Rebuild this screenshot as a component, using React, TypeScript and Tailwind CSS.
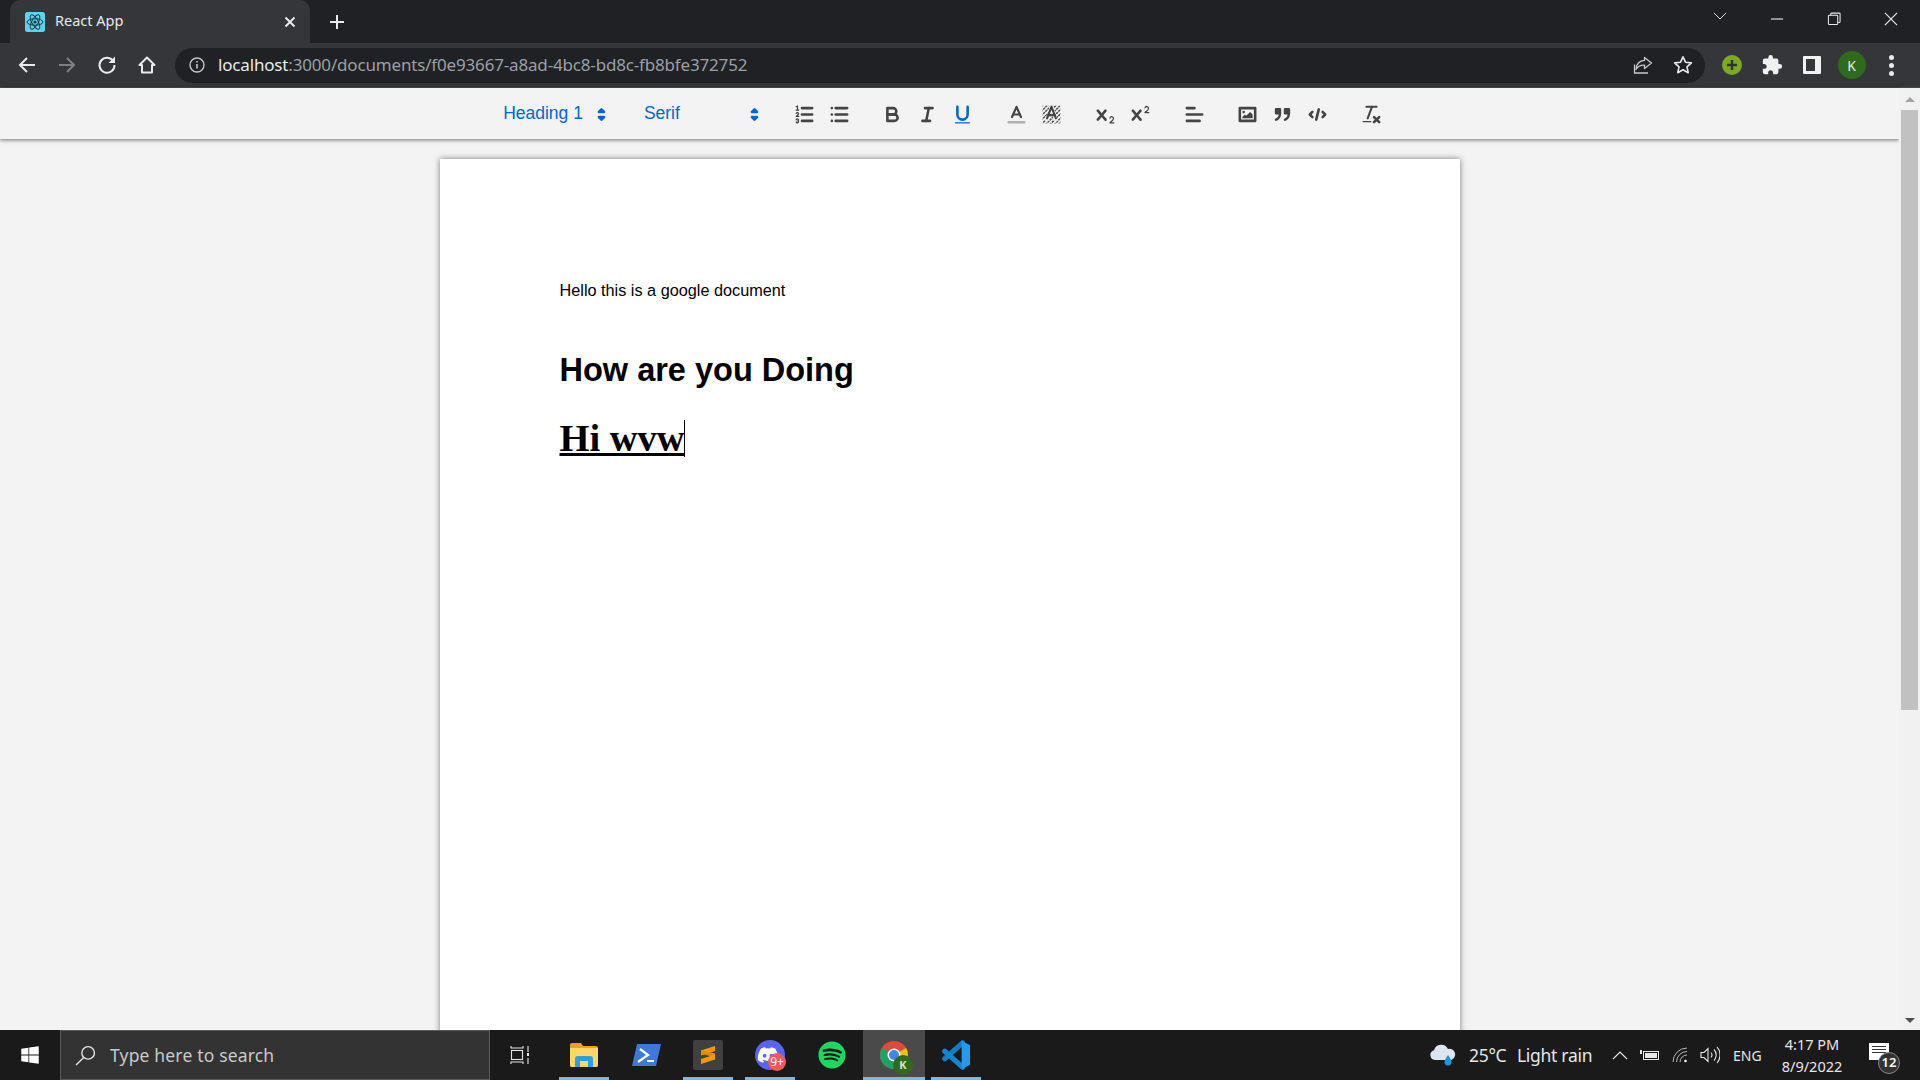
import React from "react";
import { FaDiscord, FaSpotify, FaWindows } from "react-icons/fa6";

const S = "#444";
const Ic = ({ children, active }: { children: React.ReactNode; active?: boolean }) => (
  <button className="w-[35px] h-[30px] px-[6px] py-[3px] flex items-center justify-center">
    <svg viewBox="0 0 18 18" className="w-[23px] h-[23px] shrink-0" fill="none" stroke={active ? "#06c" : S} strokeWidth="2" strokeLinecap="round" strokeLinejoin="round">
      {children}
    </svg>
  </button>
);
const Group = ({ children }: { children: React.ReactNode }) => <div className="flex mr-[18.75px]">{children}</div>;
const XPath = "M9.65,5.241a1,1,0,0,0-1.409.108L6,7.964,3.759,5.349A1,1,0,0,0,2.192,6.59178Q2.21541,6.621,2.241,6.651L4.684,9.5,2.241,12.349A1,1,0,0,0,3.71,13.70722q0.02557-.02768.049-0.05722L6,11.036,8.241,13.65a1,1,0,1,0,1.567-1.24277Q9.78459,12.378,9.759,12.349L7.316,9.5,9.759,6.651A1,1,0,0,0,9.65,5.241Z";

const Picker = ({ label, w }: { label: string; w: string }) => (
  <div className={`${w} flex items-center justify-between mr-[18.75px] text-[17.5px] text-[#0066cc] font-['Liberation_Sans',sans-serif]`}>
    <span className="-mt-[2px]">{label}</span>
    <svg viewBox="0 0 18 18" className="w-[23px] h-[23px]" fill="none" stroke="#06c" strokeWidth="2" strokeLinejoin="round" strokeLinecap="round">
      <polygon points="7 11 9 13 11 11 7 11" fill="#06c" />
      <polygon points="7 7 9 5 11 7 7 7" fill="#06c" />
    </svg>
  </div>
);

const Toolbar = () => (
  <div className="h-[51px] shrink-0 bg-[#f3f3f3] flex items-center justify-center pt-px shadow-[0_1px_4px_rgba(0,0,0,0.55)] relative z-10">
    <Picker label="Heading 1" w="w-[123px] pl-[12px] pr-[1px]" />
    <Picker label="Serif" w="w-[135px] pl-[11px] pr-[1.5px]" />
    <Group>
      <Ic>
        <line x1="7" x2="15" y1="4" y2="4" /><line x1="7" x2="15" y1="9" y2="9" /><line x1="7" x2="15" y1="14" y2="14" />
        <line strokeWidth="1" x1="2.5" x2="4.5" y1="5.5" y2="5.5" />
        <path fill={S} stroke="none" d="M3.5,6A0.5,0.5,0,0,1,3,5.5V3.085l-0.276.138A0.5,0.5,0,0,1,2.053,3c-0.124-.247-0.023-0.324.224-0.447l1-.5A0.5,0.5,0,0,1,4,2.5v3A0.5,0.5,0,0,1,3.5,6Z" />
        <path strokeWidth="1" d="M4.5,10.5h-2c0-.234,1.85-1.076,1.85-2.234A0.959,0.959,0,0,0,2.5,8.156" />
        <path strokeWidth="1" d="M2.5,14.846a0.959,0.959,0,0,0,1.85-.109A0.7,0.7,0,0,0,3.75,14a0.688,0.688,0,0,0,.6-0.736,0.959,0.959,0,0,0-1.85-.109" />
      </Ic>
      <Ic>
        <line x1="6" x2="15" y1="4" y2="4" /><line x1="6" x2="15" y1="9" y2="9" /><line x1="6" x2="15" y1="14" y2="14" />
        <line x1="3" x2="3" y1="4" y2="4" /><line x1="3" x2="3" y1="9" y2="9" /><line x1="3" x2="3" y1="14" y2="14" />
      </Ic>
    </Group>
    <Group>
      <Ic>
        <path d="M5,4H9.5A2.5,2.5,0,0,1,12,6.5v0A2.5,2.5,0,0,1,9.5,9H5A0,0,0,0,1,5,9V4A0,0,0,0,1,5,4Z" />
        <path d="M5,9h5.5A2.5,2.5,0,0,1,13,11.5v0A2.5,2.5,0,0,1,10.5,14H5a0,0,0,0,1,0,0V9A0,0,0,0,1,5,9Z" />
      </Ic>
      <Ic>
        <line x1="7" x2="13" y1="4" y2="4" /><line x1="5" x2="11" y1="14" y2="14" /><line x1="8" x2="10" y1="14" y2="4" />
      </Ic>
      <Ic active>
        <path d="M5,3V9a4.012,4.012,0,0,0,4,4H9a4.012,4.012,0,0,0,4-4V3" />
        <rect fill="#06c" stroke="none" height="1" rx=".5" ry=".5" width="12" x="3" y="15" />
      </Ic>
    </Group>
    <Group>
      <Ic>
        <line stroke="#b0b0b0" x1="3" x2="15" y1="15" y2="15" />
        <polyline strokeWidth="1.7" points="5.5 11 9 3 12.5 11" />
        <line strokeWidth="1.7" x1="11.63" x2="6.38" y1="9" y2="9" />
      </Ic>
      <Ic>
        <defs>
          <pattern id="hatch" width="2.4" height="2.4" patternUnits="userSpaceOnUse" patternTransform="rotate(45)">
            <rect width="1.1" height="1.9" fill="#444" stroke="none" />
          </pattern>
        </defs>
        <rect x="2" y="2" width="14" height="14" fill="url(#hatch)" stroke="none" />
        <polyline stroke="#f3f3f3" strokeWidth="3" points="5.5 13 9 3.500 12.5 13" />
        <polyline strokeWidth="1.7" points="5.5 12 9 3 12.5 12" />
        <line strokeWidth="1.7" x1="11.63" x2="6.38" y1="9.5" y2="9.5" />
      </Ic>
    </Group>
    <Group>
      <Ic>
        <path fill={S} stroke="none" d="M15.5,15H13.861a3.858,3.858,0,0,0,1.914-2.975,1.8,1.8,0,0,0-1.6-1.751A1.921,1.921,0,0,0,12.021,11.7a0.50013,0.50013,0,1,0,.957.291h0a0.914,0.914,0,0,1,1.053-.725,0.81,0.81,0,0,1,.744.762c0,1.076-1.16971,1.86982-1.93971,2.43082A1.45639,1.45639,0,0,0,12,15.5a0.5,0.5,0,0,0,.5.5h3A0.5,0.5,0,0,0,15.5,15Z" />
        <path fill={S} stroke="none" d={XPath} />
      </Ic>
      <Ic>
        <path fill={S} stroke="none" d="M15.5,7H13.861a4.015,4.015,0,0,0,1.914-2.975,1.8,1.8,0,0,0-1.6-1.751A1.922,1.922,0,0,0,12.021,3.7a0.5,0.5,0,1,0,.957.291,0.917,0.917,0,0,1,1.053-.725,0.81,0.81,0,0,1,.744.762c0,1.077-1.164,1.925-1.934,2.486A1.423,1.423,0,0,0,12,7.5a0.5,0.5,0,0,0,.5.5h3A0.5,0.5,0,0,0,15.5,7Z" />
        <path fill={S} stroke="none" d={XPath} />
      </Ic>
    </Group>
    <Group>
      <Ic>
        <line x1="3" x2="15" y1="9" y2="9" /><line x1="3" x2="13" y1="14" y2="14" /><line x1="3" x2="9" y1="4" y2="4" />
      </Ic>
    </Group>
    <Group>
      <Ic>
        <rect height="10" width="12" x="3" y="4" />
        <circle fill={S} stroke="none" cx="6" cy="7" r="1" />
        <polyline fill={S} stroke="none" points="5 12 5 11 7 9 8 10 11 7 13 9 13 12 5 12" />
      </Ic>
      <Ic>
        <rect fill={S} height="3" width="3" x="4" y="5" />
        <rect fill={S} height="3" width="3" x="11" y="5" />
        <path d="M7,8c0,4.031-3,5-3,5" />
        <path d="M14,8c0,4.031-3,5-3,5" />
      </Ic>
      <Ic>
        <polyline points="5 7 3 9 5 11" /><polyline points="13 7 15 9 13 11" /><line x1="10" x2="8" y1="5" y2="13" />
      </Ic>
    </Group>
    <Group>
      <Ic>
        <line strokeWidth="1.6" x1="5" x2="13" y1="3" y2="3" />
        <line strokeWidth="1.6" x1="6" x2="9.35" y1="12" y2="3" />
        <line x1="11" x2="15" y1="11" y2="15" /><line x1="15" x2="11" y1="11" y2="15" />
        <rect fill={S} stroke="none" height="1" rx=".5" ry=".5" width="7" x="2" y="14" />
      </Ic>
    </Group>
  </div>
);

const Tab = () => (
  <div className="h-[43px] shrink-0 bg-[#202124] flex items-stretch pl-[10px]">
    <div className="w-[300px] bg-[#35363a] rounded-t-[10px] flex items-center pl-[15px] pr-[12px]">
      <svg viewBox="0 0 20 20" className="w-[20px] h-[20px] shrink-0">
        <rect width="20" height="20" rx="2.5" fill="#5bd4f0" />
        <g fill="none" stroke="#1b3a46" strokeWidth="1">
          <ellipse cx="10" cy="10" rx="8" ry="3.2" />
          <ellipse cx="10" cy="10" rx="8" ry="3.2" transform="rotate(60 10 10)" />
          <ellipse cx="10" cy="10" rx="8" ry="3.2" transform="rotate(120 10 10)" />
        </g>
        <circle cx="10" cy="10" r="1.6" fill="#1b3a46" />
      </svg>
      <span className="ml-[10px] text-[#e8eaed] text-[14.5px] -mt-[2px] font-['Noto_Sans',sans-serif]">React App</span>
      <svg viewBox="0 0 12 12" className="w-[12px] h-[12px] ml-auto mr-[2px]" stroke="#e8eaed" strokeWidth="2"><path d="M1.5 1.5l9 9M10.5 1.5l-9 9" /></svg>
    </div>
    <div className="flex items-center ml-[19px]">
      <svg viewBox="0 0 16 16" className="w-[16px] h-[16px]" stroke="#e8eaed" strokeWidth="2"><path d="M8 1v14M1 8h14" /></svg>
    </div>
    <div className="ml-auto flex items-center h-[38px] pr-[1px]">
      {[
        <path d="M1 1l6.5 6.5L14 1" strokeWidth="1" />,
        <path d="M1 7.5h13" strokeWidth="1.2" />,
        <g strokeWidth="1.1"><rect x="1.5" y="3.5" width="10" height="10" rx="1" /><path d="M4 3.5V2a.8.8 0 0 1 .8-.8h8.4a.8.8 0 0 1 .8.8v8.4a.8.8 0 0 1-.8.8h-1.7" /></g>,
        <path d="M1 1l13 13M14 1L1 14" strokeWidth="1.3" />,
      ].map((d, i) => (
        <div key={i} className="w-[57px] flex items-center justify-center">
          <svg viewBox="0 0 15 15" className="w-[14px] h-[14px] overflow-visible" fill="none" stroke="#e8eaed">{d}</svg>
        </div>
      ))}
    </div>
  </div>
);

const NavBtn = ({ children }: { children: React.ReactNode }) => (
  <div className="w-[40px] flex items-center justify-center">
    <svg viewBox="0 0 24 24" className="w-[24px] h-[24px]" fill="none" stroke="#e8eaed" strokeWidth="2">{children}</svg>
  </div>
);

const Address = () => (
  <div className="h-[45px] shrink-0 bg-[#35363a] flex items-center pl-[7px] border-b border-[#4a4b4f]">
    <NavBtn><path d="M20 12H5M12 5l-7 7 7 7" /></NavBtn>
    <NavBtn><path d="M4 12h15M12 5l7 7-7 7" stroke="#7e8084" /></NavBtn>
    <NavBtn><path d="M18.5 8.5A7.5 7.5 0 1 0 19.5 12" /><path d="M20 3.5v6.5h-6.5z" fill="#e8eaed" stroke="none" /></NavBtn>
    <NavBtn><path d="M12 4.5l-7.5 7.5h2.5v7.5h10V12h2.5z" strokeLinejoin="round" /></NavBtn>
    <div className="ml-[8px] w-[1530px] h-[35px] rounded-full bg-[#202124] flex items-center pl-[14px] pr-[12px]">
      <svg viewBox="0 0 16 16" className="w-[16px] h-[16px] shrink-0" fill="none" stroke="#c4c7cb" strokeWidth="1.4">
        <circle cx="8" cy="8" r="7" /><path d="M8 7v4.5M8 4v1.6" strokeWidth="1.6" />
      </svg>
      <span className="ml-[13px] text-[17px] tracking-[-0.17px] font-['Noto_Sans',sans-serif] whitespace-nowrap text-[#9aa0a6]">
        <span className="text-[#e8eaed]">localhost</span>:3000/documents/f0e93667-a8ad-4bc8-bd8c-fb8bfe372752
      </span>
      <div className="ml-auto flex items-center gap-[20px]">
        <svg viewBox="0 0 20 20" className="w-[20px] h-[20px]" fill="none" stroke="#c4c7cb" strokeWidth="1.3">
          <path d="M1.5 9.5v8.5h13.5" /><path d="M11.5 2.5l7 5.5-7 5.5v-3.3c-4-.3-6.5 1-8.5 4.3.3-5 3.2-8.8 8.5-9.2z" strokeLinejoin="round" />
        </svg>
        <svg viewBox="0 0 20 20" className="w-[20px] h-[20px]" fill="none" stroke="#e8eaed" strokeWidth="1.6">
          <path d="M10 1.8l2.5 5.4 5.9.7-4.4 4 1.2 5.8-5.2-2.9-5.2 2.9 1.2-5.8-4.4-4 5.9-.7z" strokeLinejoin="round" />
        </svg>
      </div>
    </div>
    <div className="flex ml-[7px] items-center">
      <div className="w-[40px] flex justify-center">
        <div className="w-[20px] h-[20px] rounded-full bg-[#7da925] flex items-center justify-center">
          <svg viewBox="0 0 12 12" className="w-[12px] h-[12px]" stroke="#2b3a26" strokeWidth="2.4"><path d="M6 1v10M1 6h10" /></svg>
        </div>
      </div>
      <div className="w-[40px] flex justify-center">
        <svg viewBox="0 0 24 24" className="w-[22px] h-[22px]" fill="#f1f1f1"><path d="M20.5 11H19V7a2 2 0 0 0-2-2h-4V3.5a2.5 2.5 0 0 0-5 0V5H4a2 2 0 0 0-2 2v3.800h1.500c1.500 0 2.700 1.200 2.700 2.700S5 16.200 3.500 16.200H2V20a2 2 0 0 0 2 2h3.800v-1.500c0-1.500 1.200-2.700 2.700-2.700s2.700 1.200 2.700 2.700V22H17a2 2 0 0 0 2-2v-4h1.500a2.500 2.500 0 0 0 0-5z" /></svg>
      </div>
      <div className="w-[39px] flex justify-center">
        <div className="w-[18px] h-[18px] bg-[#f1f1f1] rounded-[1px] pl-[3px] py-[3px] pr-[6px]">
          <div className="w-full h-full bg-[#35363a]" />
        </div>
      </div>
      <div className="w-[41px] flex justify-center">
        <div className="w-[28px] h-[28px] rounded-full bg-[#2f6b1c] flex items-center justify-center text-[#e8eaed] text-[14px] font-['Noto_Sans',sans-serif]">K</div>
      </div>
      <div className="w-[38px] flex flex-col items-center gap-[3px]">
        <i className="block w-[5px] h-[5px] rounded-full bg-[#e8eaed]" />
        <i className="block w-[5px] h-[5px] rounded-full bg-[#e8eaed]" />
        <i className="block w-[5px] h-[5px] rounded-full bg-[#e8eaed]" />
      </div>
    </div>
  </div>
);

const Doc = () => (
  <div className="flex-1 min-h-0 overflow-hidden flex justify-center pt-[20px] bg-[#f3f3f3]">
    <div className="w-[1020px] h-[1320px] shrink-0 bg-white shadow-[0_0_6px_rgba(0,0,0,0.5)] pl-[120px] pt-[119px] text-black">
      <p className="text-[16.25px] leading-[24px] font-['Liberation_Sans',sans-serif]">Hello this is a google document</p>
      <h1 className="mt-[45px] text-[32.5px] leading-[46px] font-bold font-['Liberation_Sans',sans-serif]">How are you Doing</h1>
      <h1 className="mt-[22px] text-[38.5px] leading-[46px] font-bold font-['Liberation_Serif',serif]">
        <span className="relative underline decoration-[3px]">
          Hi wvw
          <i className="absolute right-0 top-[3px] w-px h-[37px] bg-black" />
        </span>
      </h1>
    </div>
  </div>
);

const Scrollbar = () => (
  <div className="w-[21px] shrink-0 bg-[#f1f1f1] flex flex-col items-center relative z-20">
    <div className="h-[22px] w-full flex items-center justify-center">
      <div className="w-0 h-0 border-x-[5px] border-x-transparent border-b-[5px] border-b-[#a3a3a3]" />
    </div>
    <div className="w-[17px] h-[600px] bg-[#c1c1c1]" />
    <div className="mt-auto h-[20px] w-full flex items-center justify-center">
      <div className="w-0 h-0 border-x-[5px] border-x-transparent border-t-[5px] border-t-[#505050]" />
    </div>
  </div>
);

const TaskBtn = ({ children, on, active }: { children: React.ReactNode; on?: boolean; active?: boolean }) => (
  <div className={`w-[62px] h-full flex items-center justify-center relative ${active ? "bg-[#4a4a4a]" : ""}`}>
    {children}
    {on && <div className={`absolute bottom-0 h-[3px] bg-[#76b9ed] ${active ? "inset-x-0" : "inset-x-[6px]"}`} />}
  </div>
);

const Taskbar = () => (
  <div className="h-[50px] shrink-0 bg-[#1a1a1a] flex items-stretch text-[#e6e6e6] relative z-30 font-['Noto_Sans',sans-serif]">
    <div className="w-[60px] flex items-center justify-center">
      <FaWindows className="w-[20px] h-[20px] text-white" />
    </div>
    <div className="w-[430px] bg-[#333333] border border-[#5a5a5a] flex items-center pl-[14px]">
      <svg viewBox="0 0 20 20" className="w-[21px] h-[21px]" fill="none" stroke="#e6e6e6" strokeWidth="1.3"><circle cx="12.500" cy="7.500" r="6" /><path d="M8.300 11.800L1 19" /></svg>
      <span className="ml-[14px] text-[17.5px] tracking-[0.17px] text-[#c9c9c9]">Type here to search</span>
    </div>
    <div className="w-[63px] flex items-center justify-center pr-[3px]">
      <svg viewBox="0 0 20 20" className="w-[20px] h-[20px]" fill="none" stroke="#e6e6e6" strokeWidth="1.1">
        <path d="M1 1v2h12V1M1 19v-2h12v2" /><rect x="1.500" y="5.500" width="11" height="9" /><path d="M18 1v6M18 13v6" /><rect x="17" y="8" width="2" height="3" fill="#e6e6e6" stroke="none" />
      </svg>
    </div>
    <TaskBtn on>
      <svg viewBox="0 0 28 24" className="w-[28px] h-[24px]">
        <path d="M0 2a2 2 0 0 1 2-2h9l2 3h13a2 2 0 0 1 2 2v17a2 2 0 0 1-2 2H2a2 2 0 0 1-2-2z" fill="#e8a417" />
        <path d="M0 5h28v17a2 2 0 0 1-2 2H2a2 2 0 0 1-2-2z" fill="#ffd768" />
        <path d="M5 24v-8a3 3 0 0 1 3-3h12a3 3 0 0 1 3 3v8h-5v-6h-8v6z" fill="#2d9fe0" />
      </svg>
    </TaskBtn>
    <TaskBtn>
      <svg viewBox="0 0 29 22" className="w-[29px] h-[22px]">
        <path d="M5 0h24l-5 22H0z" fill="#3f78d8" />
        <path d="M8 5l8 6-10 7" fill="none" stroke="#fff" strokeWidth="2.200" />
        <path d="M15 17h7" stroke="#fff" strokeWidth="2" />
      </svg>
    </TaskBtn>
    <TaskBtn on>
      <div className="w-[30px] h-[30px] rounded-[2px] bg-[#404040] flex items-center justify-center">
        <svg viewBox="0 0 16 20" className="w-[16px] h-[20px]" fill="#ff9800">
          <path d="M1 5.500L15 1v5L1 10.500z" />
          <path d="M1 8.500L15 12.500v-4L1 5z" fill="#e68a00" />
          <path d="M1 14L15 9.500v5L1 19z" />
        </svg>
      </div>
    </TaskBtn>
    <TaskBtn on>
      <div className="relative w-[30px] h-[30px] rounded-full bg-[#5865f2] flex items-center justify-center">
        <FaDiscord className="w-[22px] h-[22px] text-white -translate-x-[2px]" />
        <div className="absolute -right-[1px] -bottom-[1px] w-[18px] h-[18px] rounded-full bg-[#ed5a5f] flex items-center justify-center text-[12px] leading-none text-white">9+</div>
      </div>
    </TaskBtn>
    <TaskBtn>
      <FaSpotify className="w-[28px] h-[28px] text-[#1ed760]" />
    </TaskBtn>
    <TaskBtn on active>
      <div className="relative w-[28px] h-[28px]">
        <svg viewBox="0 0 28 28" className="w-[28px] h-[28px]">
          <circle cx="14" cy="14" r="14" fill="#dd4b3e" />
          <path d="M14 14L26.100 7A14 14 0 0 1 14 28z" fill="#f4c20d" />
          <path d="M14 14L14 28A14 14 0 0 1 1.900 7z" fill="#1da462" />
          <circle cx="14" cy="14" r="6.500" fill="#fff" /><circle cx="14" cy="14" r="5" fill="#4285f4" />
        </svg>
        <div className="absolute -right-[5px] -bottom-[6px] w-[20px] h-[20px] rounded-full bg-[#2f6b1c] flex items-center justify-center text-[11px] font-bold text-[#cfe3c5]">K</div>
      </div>
    </TaskBtn>
    <TaskBtn on>
      <svg viewBox="0 0 32 32" className="w-[30px] h-[30px]">
        <path d="M23 3L4 20" stroke="#0f7ec4" strokeWidth="5.500" strokeLinecap="round" />
        <path d="M4 12l19 17" stroke="#1586d2" strokeWidth="5.500" strokeLinecap="round" />
        <path d="M22 1l9 4.500v21L22 31z" fill="#1f9cf0" />
      </svg>
    </TaskBtn>
    <div className="ml-auto flex items-center">
      <svg viewBox="0 0 28 24" className="w-[28px] h-[24px] mr-[12px]">
        <path d="M6 17a5 5 0 0 1-1-9.800A7.500 7.500 0 0 1 19 6a5.500 5.500 0 0 1 3 11z" fill="#dce6f2" />
        <path d="M19 12c2 3 3.500 5 3.500 7a3.500 3.500 0 0 1-7 0c0-2 1.500-4 3.500-7z" fill="#1c95e0" />
      </svg>
      <span className="text-[17.5px] tracking-[-0.3px] w-[48px]">25°C</span>
      <span className="text-[17.5px] tracking-[-0.3px] w-[95px]">Light rain</span>
      <svg viewBox="0 0 16 10" className="w-[16px] h-[10px] mr-[12px]" fill="none" stroke="#e6e6e6" strokeWidth="1.200"><path d="M1 9l7-7 7 7" /></svg>
      <svg viewBox="0 0 20 12" className="w-[20px] h-[12px] mr-[12px]" fill="none" stroke="#e6e6e6">
        <rect x="3.500" y="2.500" width="15" height="8" /><rect x="5" y="4" width="12" height="5" fill="#e6e6e6" stroke="none" /><path d="M1 1v4" strokeWidth="2" />
      </svg>
      <svg viewBox="0 0 16 16" className="w-[16px] h-[16px] mr-[12px]" fill="none" stroke="#b5b5b5" strokeWidth="1">
        <path d="M1 15A14 14 0 0 1 15 1M4.500 15A10.500 10.500 0 0 1 15 4.500M8 15a7 7 0 0 1 7-7" /><circle cx="13.500" cy="14" r="1.300" fill="#fff" stroke="none" />
      </svg>
      <svg viewBox="0 0 20 18" className="w-[20px] h-[18px] mr-[13px]" fill="none" stroke="#e6e6e6" strokeWidth="1.100">
        <path d="M1 6.500v5h3l4 4v-13l-4 4zM11 6.500a4 4 0 0 1 0 5M14 3.500a8 8 0 0 1 0 11M17 1a12 12 0 0 1 0 16" />
      </svg>
      <span className="text-[14px] w-[28px] mr-[13px]">ENG</span>
      <div className="w-[76px] flex flex-col items-center text-[14.500px] leading-[22px] mr-[19px] -mt-[1px]">
        <span>4:17 PM</span>
        <span>8/9/2022</span>
      </div>
      <div className="relative w-[31px] h-[32px] mr-[20px]">
        <div className="absolute left-0 top-[4px] w-[20px] h-[17px] bg-white flex flex-col gap-[2px] px-[3px] py-[3px]">
          <i className="block h-px bg-[#333]" /><i className="block h-px bg-[#333]" /><i className="block h-px bg-[#333]" />
        </div>
        <div className="absolute left-[9px] top-[13px] w-[22px] h-[22px] rounded-full bg-[#333] border border-[#888] flex items-center justify-center text-[13px] font-semibold text-white">12</div>
      </div>
    </div>
  </div>
);

export default function App() {
  return (
    <div className="w-[1920px] h-[1080px] overflow-hidden flex flex-col bg-[#f3f3f3]">
      <Tab />
      <Address />
      <div className="flex-1 min-h-0 flex">
        <div className="flex-1 min-w-0 flex flex-col">
          <Toolbar />
          <Doc />
        </div>
        <Scrollbar />
      </div>
      <Taskbar />
    </div>
  );
}
